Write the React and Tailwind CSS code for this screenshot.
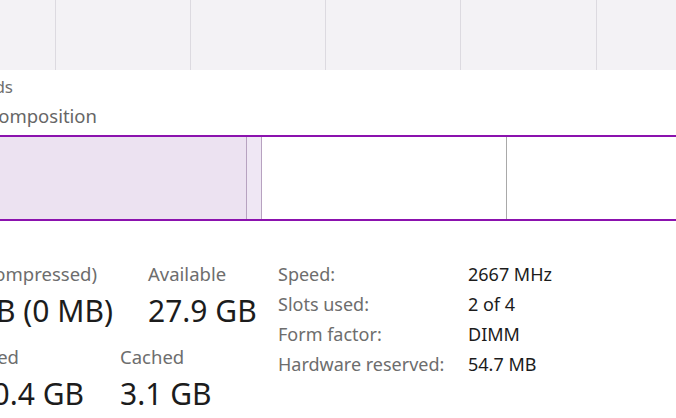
export default function App() {
  const font = { fontFamily: '"Noto Sans", "Open Sans", sans-serif' };
  return (
    <div className="w-[676px] h-[418px] overflow-hidden bg-white" style={font}>
      {/* graph area (cropped) */}
      <div className="h-[70px] bg-[#f3f2f5] flex">
        <div className="w-[55px] shrink-0" />
        <div className="w-[135px] shrink-0 border-l border-[#dcdae0]" />
        <div className="w-[135px] shrink-0 border-l border-[#dcdae0]" />
        <div className="w-[135px] shrink-0 border-l border-[#dcdae0]" />
        <div className="w-[136px] shrink-0 border-l border-[#dcdae0]" />
        <div className="flex-1 border-l border-[#dcdae0]" />
      </div>

      {/* axis label */}
      <div className="mt-[7px] w-[13px] flex justify-end">
        <span className="whitespace-nowrap text-[17px] leading-[20px] text-[#6f6f6f]">60 seconds</span>
      </div>

      {/* section title */}
      <div className="mt-[6px] w-[97px] flex justify-end">
        <span className="whitespace-nowrap text-[18.5px] leading-[26px] text-[#666666]">Memory composition</span>
      </div>

      {/* composition bar */}
      <div className="mt-[6px] h-[86px] border-y-2 border-[#8b12ae] flex">
        <div className="w-[247px] shrink-0 bg-[#ece2f1] border-r border-[#b7a2c0]" />
        <div className="w-[15px] shrink-0 bg-[#efe7f4] border-r border-[#b7a2c0]" />
        <div className="w-[245px] shrink-0 bg-white border-r border-[#a9a9a9]" />
        <div className="flex-1 bg-white" />
      </div>

      {/* stats */}
      <div className="mt-[38px] flex items-start">
        <div className="w-[278px] shrink-0">
          {/* row 1 */}
          <div className="flex">
            <div className="w-[148px] shrink-0">
              <div className="mt-[2px] w-[97px] flex justify-end">
                <span className="whitespace-nowrap text-[18.5px] leading-[26px] text-[#6d6d6d]">In use (Compressed)</span>
              </div>
              <div className="mt-[6px] w-[113px] flex justify-end">
                <span className="whitespace-nowrap text-[30px] leading-[36px] text-[#1c1c1c]">3.9 GB (0 MB)</span>
              </div>
            </div>
            <div>
              <div className="mt-[2px] whitespace-nowrap text-[18.5px] leading-[26px] text-[#6d6d6d]">Available</div>
              <div className="mt-[6px] whitespace-nowrap text-[30px] leading-[36px] text-[#1c1c1c]">27.9 GB</div>
            </div>
          </div>
          {/* row 2 */}
          <div className="flex mt-[15px]">
            <div className="w-[120px] shrink-0">
              <div className="w-[19px] flex justify-end">
                <span className="whitespace-nowrap text-[18.5px] leading-[26px] text-[#6d6d6d]">Committed</span>
              </div>
              <div className="mt-[6px] w-[84px] flex justify-end">
                <span className="whitespace-nowrap text-[30px] leading-[36px] text-[#1c1c1c]">5.2/10.4 GB</span>
              </div>
            </div>
            <div>
              <div className="whitespace-nowrap text-[18.5px] leading-[26px] text-[#6d6d6d]">Cached</div>
              <div className="mt-[6px] whitespace-nowrap text-[30px] leading-[36px] text-[#1c1c1c]">3.1 GB</div>
            </div>
          </div>
        </div>

        {/* hardware info */}
        <div className="grid grid-cols-[190px_auto] content-start text-[18px] leading-[30px]">
          <div className="text-[#6d6d6d] whitespace-nowrap">Speed:</div>
          <div className="text-[#1c1c1c] whitespace-nowrap">2667 MHz</div>
          <div className="text-[#6d6d6d] whitespace-nowrap">Slots used:</div>
          <div className="text-[#1c1c1c] whitespace-nowrap">2 of 4</div>
          <div className="text-[#6d6d6d] whitespace-nowrap">Form factor:</div>
          <div className="text-[#1c1c1c] whitespace-nowrap">DIMM</div>
          <div className="text-[#6d6d6d] whitespace-nowrap">Hardware reserved:</div>
          <div className="text-[#1c1c1c] whitespace-nowrap">54.7 MB</div>
        </div>
      </div>
    </div>
  );
}
